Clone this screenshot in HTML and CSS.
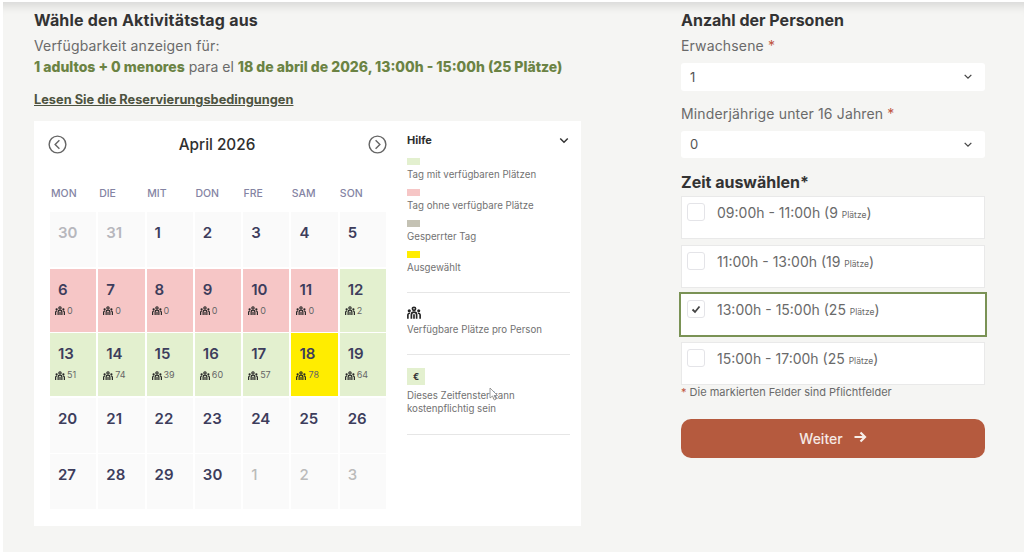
FILE: index.html
```html
<!DOCTYPE html>
<html lang="de">
<head>
<meta charset="utf-8">
<title>Aktivitätstag</title>
<link rel="stylesheet" href="styles.css">
</head>
<body>
<svg class="defs" width="0" height="0" aria-hidden="true">
  <symbol id="people" viewBox="0 0 16 14">
    <g fill="none" stroke="#262626" stroke-width="1.9">
      <circle cx="8" cy="2.800" r="1.800"/>
      <path d="M5 14V9.500a3 3 0 0 1 6 0V14"/>
      <path d="M1 14V9.800a2 2 0 0 1 2.500-1.900"/>
      <path d="M15 14V9.800a2 2 0 0 0-2.500-1.900"/>
      <path d="M8 9v5"/>
    </g>
    <circle cx="2.600" cy="5" r="1.800" fill="#262626"/>
    <circle cx="13.400" cy="5" r="1.800" fill="#262626"/>
  </symbol>
</svg>
<main class="page">
  <section class="left">
    <h2 class="title">Wähle den Aktivitätstag aus</h2>
    <p class="avail">Verfügbarkeit anzeigen für:</p>
    <p class="summary"><b>1 adultos + 0 menores</b> para el <b>18 de abril de 2026, 13:00h - 15:00h (25 Plätze)</b></p>
    <a class="terms" href="#">Lesen Sie die Reservierungsbedingungen</a>
    <div class="card">
      <div class="cal">
        <div class="cal-head">
          <svg class="nav" viewBox="0 0 20 20"><circle cx="10" cy="10" r="8.800"/><path d="M12 5.500 7.500 10l4.500 4.500"/></svg>
          <span class="month">April 2026</span>
          <svg class="nav" viewBox="0 0 20 20"><circle cx="10" cy="10" r="8.800"/><path d="M8 5.500 12.500 10 8 14.500"/></svg>
        </div>
        <div class="weekdays"><span>MON</span><span>DIE</span><span>MIT</span><span>DON</span><span>FRE</span><span>SAM</span><span>SON</span></div>
        <div class="days">
          <div class="day muted"><span class="num">30</span></div>
          <div class="day muted"><span class="num">31</span></div>
          <div class="day"><span class="num">1</span></div>
          <div class="day"><span class="num">2</span></div>
          <div class="day"><span class="num">3</span></div>
          <div class="day"><span class="num">4</span></div>
          <div class="day"><span class="num">5</span></div>

          <div class="day full"><span class="num">6</span><span class="seats"><svg class="pi"><use href="#people"/></svg>0</span></div>
          <div class="day full"><span class="num">7</span><span class="seats"><svg class="pi"><use href="#people"/></svg>0</span></div>
          <div class="day full"><span class="num">8</span><span class="seats"><svg class="pi"><use href="#people"/></svg>0</span></div>
          <div class="day full"><span class="num">9</span><span class="seats"><svg class="pi"><use href="#people"/></svg>0</span></div>
          <div class="day full"><span class="num">10</span><span class="seats"><svg class="pi"><use href="#people"/></svg>0</span></div>
          <div class="day full"><span class="num">11</span><span class="seats"><svg class="pi"><use href="#people"/></svg>0</span></div>
          <div class="day open"><span class="num">12</span><span class="seats"><svg class="pi"><use href="#people"/></svg>2</span></div>

          <div class="day open"><span class="num">13</span><span class="seats"><svg class="pi"><use href="#people"/></svg>51</span></div>
          <div class="day open"><span class="num">14</span><span class="seats"><svg class="pi"><use href="#people"/></svg>74</span></div>
          <div class="day open"><span class="num">15</span><span class="seats"><svg class="pi"><use href="#people"/></svg>39</span></div>
          <div class="day open"><span class="num">16</span><span class="seats"><svg class="pi"><use href="#people"/></svg>60</span></div>
          <div class="day open"><span class="num">17</span><span class="seats"><svg class="pi"><use href="#people"/></svg>57</span></div>
          <div class="day sel"><span class="num">18</span><span class="seats"><svg class="pi"><use href="#people"/></svg>78</span></div>
          <div class="day open"><span class="num">19</span><span class="seats"><svg class="pi"><use href="#people"/></svg>64</span></div>

          <div class="day"><span class="num">20</span></div>
          <div class="day"><span class="num">21</span></div>
          <div class="day"><span class="num">22</span></div>
          <div class="day"><span class="num">23</span></div>
          <div class="day"><span class="num">24</span></div>
          <div class="day"><span class="num">25</span></div>
          <div class="day"><span class="num">26</span></div>

          <div class="day"><span class="num">27</span></div>
          <div class="day"><span class="num">28</span></div>
          <div class="day"><span class="num">29</span></div>
          <div class="day"><span class="num">30</span></div>
          <div class="day faded"><span class="num">1</span></div>
          <div class="day faded"><span class="num">2</span></div>
          <div class="day faded"><span class="num">3</span></div>
        </div>
      </div>
      <aside class="help">
        <div class="help-head"><strong>Hilfe</strong><svg class="help-chev" viewBox="0 0 12 8"><path d="M1.500 1.500 6 6l4.500-4.500"/></svg></div>
        <div class="legend">
          <i class="sw sw-green"></i><span>Tag mit verfügbaren Plätzen</span>
          <i class="sw sw-pink"></i><span>Tag ohne verfügbare Plätze</span>
          <i class="sw sw-grey"></i><span>Gesperrter Tag</span>
          <i class="sw sw-yellow"></i><span>Ausgewählt</span>
        </div>
        <div class="help-block people-block">
          <svg class="pi-big"><use href="#people"/></svg>
          <span>Verfügbare Plätze pro Person</span>
        </div>
        <div class="help-block euro-block">
          <b class="euro">€</b>
          <span>Dieses Zeitfenster kann kostenpflichtig sein</span>
        </div>
        <svg class="cursor" viewBox="0 0 10 14"><path d="M1 1v10l2.500-2 1.800 4 1.700-.8-1.800-3.700H8.500z"/></svg>
      </aside>
    </div>
  </section>
  <section class="right">
    <h2 class="title">Anzahl der Personen</h2>
    <label class="flabel">Erwachsene <em>*</em></label>
    <div class="select"><span>1</span><svg class="chev" viewBox="0 0 12 8"><path d="M2 2l4 4 4-4"/></svg></div>
    <label class="flabel second">Minderjährige unter 16 Jahren <em>*</em></label>
    <div class="select"><span>0</span><svg class="chev" viewBox="0 0 12 8"><path d="M2 2l4 4 4-4"/></svg></div>
    <h2 class="title zeit">Zeit auswählen*</h2>
    <div class="slots">
      <div class="slot"><i class="box"></i><span>09:00h - 11:00h (9 <small>Plätze</small>)</span></div>
      <div class="slot"><i class="box"></i><span>11:00h - 13:00h (19 <small>Plätze</small>)</span></div>
      <div class="slot active"><i class="box"><svg viewBox="0 0 12 12"><path d="M2.500 6.500 5 9l4.500-5.500"/></svg></i><span>13:00h - 15:00h (25 <small>Plätze</small>)</span></div>
      <div class="slot"><i class="box"></i><span>15:00h - 17:00h (25 <small>Plätze</small>)</span></div>
    </div>
    <p class="note"><em>*</em> Die markierten Felder sind Pflichtfelder</p>
    <button class="next" type="button">Weiter <svg viewBox="0 0 14 14"><path d="M1.500 7h10.500M7.500 2.500 12 7l-4.500 4.500"/></svg></button>
  </section>
</main>
</body>
</html>
```
FILE: styles.css
```css
* { box-sizing: border-box; }
html, body { margin: 0; height: 100%; }
body {
  background: #fff;
  font-family: Inter, "Liberation Sans", sans-serif;
  color: #6a6a6a;
  overflow: hidden;
}
.defs { position: absolute; }
.page {
  margin: 2px 0 0 3px;
  height: 550px;
  background: #f5f5f3;
  box-shadow: inset 0 12px 10px -8px rgba(0, 0, 0, .12);
  display: flex;
  padding: 9px 39px 0 31px;
  justify-content: space-between;
}
.left { width: 547px; }
.right { width: 304px; }
.title {
  margin: 0;
  font-size: 16px;
  line-height: 18px;
  font-weight: 700;
  color: #333;
}
.left .title { letter-spacing: .2px; }
.avail {
  margin: 8px 0 0;
  font-size: 14px;
  line-height: 18px;
  letter-spacing: .17px;
}
.summary {
  margin: 3px 0 0;
  font-size: 14px;
  line-height: 18px;
  color: #6a6a6a;
}
.summary b { color: #6b8344; font-weight: 800; }
.terms {
  display: block;
  margin-top: 15px;
  font-size: 12.800px;
  line-height: 18px;
  font-weight: 700;
  color: #4d5340;
}
.card {
  margin-top: 12px;
  height: 405px;
  background: #fff;
  display: flex;
  padding: 0 11px 0 16px;
  justify-content: space-between;
}
.cal { width: 336px; }
.cal-head {
  display: flex;
  align-items: center;
  justify-content: space-between;
  height: 20px;
  margin-top: 13px;
}
.nav { width: 19px; height: 19px; fill: none; stroke: #666; stroke-width: 1.5; }
.nav:first-child { margin-left: -2.500px; }
.nav:last-child { margin-right: -.500px; }
.month { font-size: 15.300px; font-weight: 500; color: #2f2f2f; }
.weekdays {
  display: grid;
  grid-template-columns: repeat(7, 1fr);
  gap: 2px;
  margin-top: 33px;
  padding-left: 1px;
  font-size: 10.500px;
  line-height: 14px;
  font-weight: 500;
  color: #8484a3;
}
.days {
  display: grid;
  grid-template-columns: repeat(7, 1fr);
  grid-template-rows: 55px 63px 63px 55px 55px;
  gap: 1.500px 2px;
  margin-top: 11px;
}
.day {
  background: #fafafa;
  padding: 12px 0 0 8px;
  display: flex;
  flex-direction: column;
  color: #3d3d5c;
}
.num { font-size: 15px; line-height: 18px; font-weight: 600; }
.seats {
  display: flex;
  align-items: center;
  gap: 2px;
  margin: 6px 0 0 -3px;
  font-size: 9px;
  line-height: 12px;
  color: #666;
  font-weight: 400;
}
.pi { width: 10px; height: 9px; flex: none; }
.muted { color: #b7b7bd; }
.faded { color: #bbb; }
.faded .num { font-weight: 500; }
.full { background: #f6c6c6; }
.open { background: #e3f0cf; }
.sel { background: #ffed00; }
.help { width: 163px; position: relative; font-size: 9.700px; line-height: 13px; color: #727272; }
.help-head {
  display: flex;
  justify-content: space-between;
  align-items: center;
  height: 14px;
  margin-top: 12px;
}
.help-head strong { font-size: 11px; color: #2f2f2f; font-weight: 700; }
.help-chev { width: 10px; height: 7px; margin-right: 1px; fill: none; stroke: #333; stroke-width: 1.8; }
.legend {
  display: flex;
  flex-direction: column;
  align-items: flex-start;
  padding-top: 11px;
  height: 146px;
  border-bottom: 1px solid #e6e6e6;
}
.legend span { display: block; height: 13px; margin: 3.400px 0 7.600px; white-space: nowrap; }
.sw { display: block; width: 13px; height: 7px; }
.sw-green { background: #e3f0cf; }
.sw-pink { background: #f6c6c6; }
.sw-grey { background: #c4c2b4; }
.sw-yellow { background: #ffed00; }
.help-block { display: flex; flex-direction: column; align-items: flex-start; border-bottom: 1px solid #e6e6e6; }
.people-block { height: 62px; padding-top: 13px; }
.pi-big { width: 14px; height: 13px; margin-bottom: 4px; }
.euro-block { height: 80px; padding-top: 13px; }
.euro {
  display: flex;
  align-items: center;
  justify-content: center;
  width: 18px;
  height: 17px;
  background: #e3f0cf;
  color: #333;
  font-size: 9px;
  margin-bottom: 4px;
}
.cursor {
  position: absolute;
  left: 82px;
  top: 266px;
  width: 10px;
  height: 14px;
  fill: #fff;
  stroke: #777;
  stroke-width: .7;
}
.flabel { display: block; margin-top: 8px; font-size: 14px; line-height: 18px; letter-spacing: .15px; }
.flabel.second { margin-top: 14px; }
.flabel em, .note em { color: #c0563f; font-style: normal; }
.select {
  margin-top: 8px;
  height: 27.500px;
  background: #fff;
  border-radius: 3px;
  display: flex;
  align-items: center;
  justify-content: space-between;
  padding: 0 12px 0 9px;
  font-size: 13px;
  color: #555;
}
.chev { width: 10px; height: 7px; fill: none; stroke: #444; stroke-width: 1.5; }
.zeit { margin-top: 15px; }
.slots { margin-top: 5px; display: flex; flex-direction: column; gap: 6px; }
.slot {
  height: 43px;
  background: #fff;
  border: 1px solid #e9e9e9;
  display: flex;
  align-items: flex-start;
  gap: 12px;
  padding: 6px 0 0 5px;
  font-size: 14px;
  line-height: 20px;
  color: #6a6a6a;
}
.slot small { font-size: 8.500px; }
.slot.active {
  height: 45px;
  margin: -2px -2px -1px -2px;
  border: 2px solid #7a9255;
  padding-left: 6px;
}
.box {
  width: 18px;
  height: 18px;
  flex: none;
  background: #fff;
  border: 1px solid #e4e4e8;
  border-radius: 3px;
  display: flex;
  align-items: center;
  justify-content: center;
}
.box svg { width: 12px; height: 12px; fill: none; stroke: #444; stroke-width: 1.8; }
.note { margin: 0; font-size: 11px; line-height: 14px; color: #6a6a6a; }
.next {
  display: flex;
  align-items: center;
  justify-content: center;
  gap: 10px;
  width: 100%;
  height: 39px;
  margin-top: 20px;
  border: 0;
  border-radius: 10px;
  background: #b55a3e;
  color: #f5e9e4;
  font: 500 14px Inter, "Liberation Sans", sans-serif;
}
.next svg { width: 14px; height: 14px; margin-bottom: 4px; fill: none; stroke: #f7eee9; stroke-width: 2.200; }
```
